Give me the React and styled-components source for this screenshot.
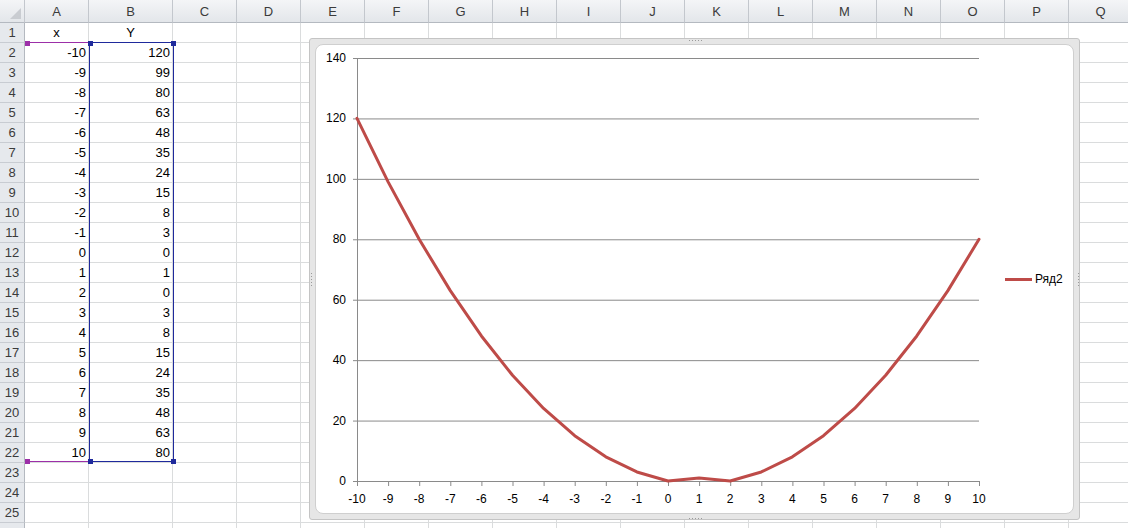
import React from "react";
import styled, { createGlobalStyle } from "styled-components";

const GlobalStyle = createGlobalStyle`
  html, body {
    margin: 0;
    padding: 0;
    background: #ffffff;
    overflow: hidden;
  }
  body {
    font-family: "Liberation Sans", Arial, sans-serif;
  }
`;

const COLS = ["A", "B", "C", "D", "E", "F", "G", "H", "I", "J", "K", "L", "M", "N", "O", "P", "Q", "R"];
const XS = Array.from({ length: 21 }, (_, i) => i - 10);
const YS = [120, 99, 80, 63, 48, 35, 24, 15, 8, 3, 0, 1, 0, 3, 8, 15, 24, 35, 48, 63, 80];

const Sheet = styled.div`
  position: relative;
  width: 1128px;
  height: 528px;
  overflow: hidden;
`;

const Grid = styled.div`
  display: grid;
  grid-template-columns: 25px 64px 84px repeat(16, 64px);
  grid-template-rows: 23px repeat(26, 20px);
`;

const Corner = styled.div`
  position: relative;
  box-sizing: border-box;
  background: linear-gradient(#f4f5f7, #e3e6ea);
  border-right: 1px solid #c3c7cd;
  border-bottom: 1px solid #b4b9c0;

  &::after {
    content: "";
    position: absolute;
    right: 3px;
    bottom: 3px;
    border-left: 11px solid transparent;
    border-bottom: 11px solid #c9ccd1;
  }
`;

const ColHead = styled.div`
  box-sizing: border-box;
  display: flex;
  align-items: center;
  justify-content: center;
  background: linear-gradient(#f4f5f7, #e3e6ea);
  border-right: 1px solid #c3c7cd;
  border-bottom: 1px solid #b4b9c0;
  color: #3b3b3b;
  font-size: 13px;
`;

const RowHead = styled.div`
  box-sizing: border-box;
  display: flex;
  align-items: center;
  justify-content: center;
  background: #e6e9ed;
  border-right: 1px solid #b4b9c0;
  border-bottom: 1px solid #c8ccd2;
  color: #3b3b3b;
  font-size: 13px;
`;

const Cell = styled.div`
  box-sizing: border-box;
  display: flex;
  align-items: center;
  justify-content: ${({ $align }) => ($align === "center" ? "center" : "flex-end")};
  padding: 0 2px;
  border-right: 1px solid #dadcdd;
  border-bottom: 1px solid #dadcdd;
  color: #000;
  font-size: 13px;
`;

const Selection = styled.div`
  position: absolute;
  left: ${({ $x }) => $x}px;
  top: ${({ $y }) => $y}px;
  width: ${({ $w }) => $w}px;
  height: ${({ $h }) => $h}px;
  box-sizing: border-box;
  border: 1px solid ${({ $color }) => $color};
  border-left-width: ${({ $sides }) => ($sides ? 1 : 0)}px;
  border-right-width: ${({ $sides }) => ($sides ? 1 : 0)}px;
`;

const Handle = styled.div`
  position: absolute;
  left: ${({ $x }) => $x - 2}px;
  top: ${({ $y }) => $y - 2}px;
  width: 5px;
  height: 5px;
  background: ${({ $color }) => $color};
`;

const ChartFrame = styled.div`
  position: absolute;
  left: 309px;
  top: 38px;
  width: 771px;
  height: 482px;
  box-sizing: border-box;
  padding: 5px;
  background: #e6e6e6;
  border: 1px solid #c4c4c4;
  border-radius: 3px;
`;

const Grip = styled.div`
  position: absolute;
  ${({ $side }) =>
    $side === "top"
      ? "top: 0; left: 50%; width: 14px; height: 2px; margin-left: -7px;"
      : $side === "bottom"
      ? "bottom: 0; left: 50%; width: 14px; height: 2px; margin-left: -7px;"
      : $side === "left"
      ? "left: 0; top: 50%; width: 2px; height: 14px; margin-top: -7px;"
      : "right: 0; top: 50%; width: 2px; height: 14px; margin-top: -7px;"}
  background-image: radial-gradient(circle, #9a9a9a 0.7px, transparent 0.9px);
  background-size: 3px 3px;
`;

const ChartBody = styled.div`
  width: 100%;
  height: 100%;
  box-sizing: border-box;
  display: flex;
  align-items: center;
  background: #ffffff;
  border: 1px solid #cfcfcf;
  border-radius: 8px;
`;

const Legend = styled.div`
  display: flex;
  align-items: center;
  gap: 3px;
  padding-left: 5px;
  font-size: 12px;
  color: #000;
`;

const LegendLine = styled.span`
  display: block;
  width: 27px;
  height: 3px;
  background: #be4b48;
`;

const PL = 41;
const PR = 663;
const PT = 13;
const PB = 436;
const px = (x) => PL + ((x + 10) * (PR - PL)) / 20;
const py = (y) => PB - (y * (PB - PT)) / 140;

const Plot = () => {
  const ticksY = [0, 20, 40, 60, 80, 100, 120, 140];
  const points = XS.map((x, i) => `${px(x)},${py(YS[i])}`).join(" ");
  return (
    <svg width="684" height="468" style={{ display: "block", flex: "none" }}>
      {ticksY.map((t) => (
        <g key={t}>
          <line x1={PL - 4} x2={PR} y1={py(t) + 0.5} y2={py(t) + 0.5} stroke="#8a8a8a" strokeWidth="1" />
          <text x={PL - 11} y={py(t) + 4} textAnchor="end" fontSize="12" fontFamily="Liberation Sans, Arial, sans-serif" fill="#000">
            {t}
          </text>
        </g>
      ))}
      <line x1={PL + 0.5} x2={PL + 0.5} y1={PT} y2={PB + 5} stroke="#8a8a8a" strokeWidth="1" />
      {XS.map((x) => (
        <g key={x}>
          <line x1={px(x) + 0.5} x2={px(x) + 0.5} y1={PB} y2={PB + 5} stroke="#8a8a8a" strokeWidth="1" />
          <text x={px(x)} y={PB + 22} textAnchor="middle" fontSize="12" fontFamily="Liberation Sans, Arial, sans-serif" fill="#000">
            {x}
          </text>
        </g>
      ))}
      <polyline points={points} fill="none" stroke="#be4b48" strokeWidth="3" strokeLinejoin="round" strokeLinecap="round" />
    </svg>
  );
};

const App = () => {
  const rows = Array.from({ length: 26 }, (_, i) => i + 1);
  return (
    <>
      <GlobalStyle />
      <Sheet>
        <Grid>
          <Corner />
          {COLS.map((c) => (
            <ColHead key={c}>{c}</ColHead>
          ))}
          {rows.map((r) => (
            <React.Fragment key={r}>
              <RowHead>{r}</RowHead>
              {COLS.map((c) => {
                let value = "";
                let align = "right";
                if (r === 1 && c === "A") {
                  value = "x";
                  align = "center";
                } else if (r === 1 && c === "B") {
                  value = "Y";
                  align = "center";
                } else if (r >= 2 && r <= 22 && c === "A") {
                  value = XS[r - 2];
                } else if (r >= 2 && r <= 22 && c === "B") {
                  value = YS[r - 2];
                }
                return (
                  <Cell key={c} $align={align}>
                    {value}
                  </Cell>
                );
              })}
            </React.Fragment>
          ))}
        </Grid>

        <Selection $x={26} $y={42} $w={64} $h={420} $color="#9c2fa8" />
        <Selection $x={89} $y={42} $w={85} $h={420} $color="#1f2a9c" $sides />
        <Handle $x={27} $y={43} $color="#9c2fa8" />
        <Handle $x={27} $y={461} $color="#9c2fa8" />
        <Handle $x={90} $y={43} $color="#1f2a9c" />
        <Handle $x={173} $y={43} $color="#1f2a9c" />
        <Handle $x={90} $y={461} $color="#1f2a9c" />
        <Handle $x={173} $y={461} $color="#1f2a9c" />

        <ChartFrame>
          <Grip $side="top" />
          <Grip $side="bottom" />
          <Grip $side="left" />
          <Grip $side="right" />
          <ChartBody>
            <Plot />
            <Legend>
              <LegendLine />
              <span>Ряд2</span>
            </Legend>
          </ChartBody>
        </ChartFrame>
      </Sheet>
    </>
  );
};

export default App;
